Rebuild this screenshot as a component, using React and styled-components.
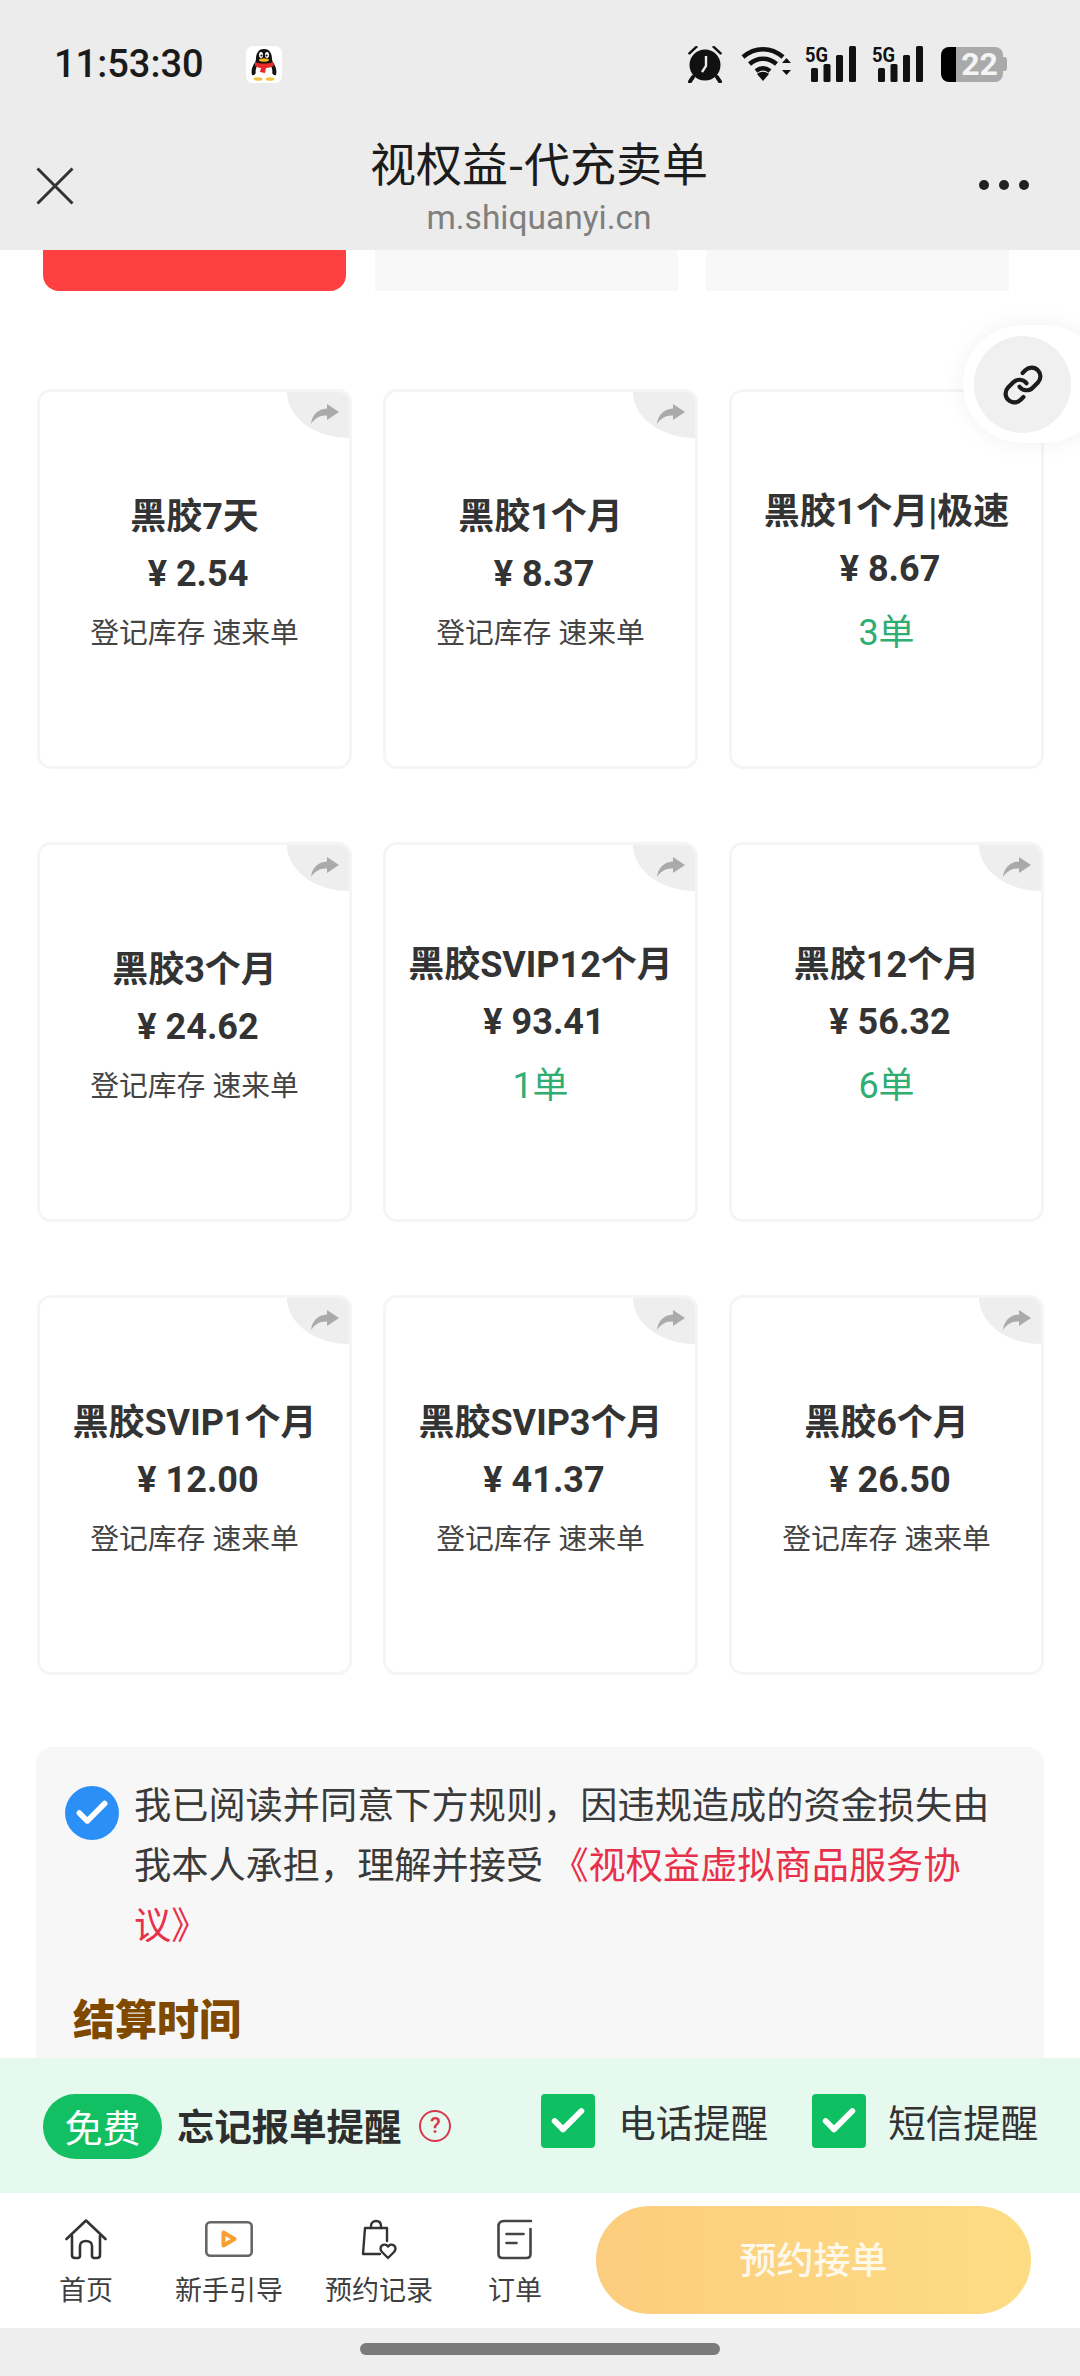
import React from 'react'
import styled, { createGlobalStyle } from 'styled-components'
import { Link as LinkIcon, Check } from 'lucide-react'

const GlobalStyle = createGlobalStyle`
  html, body {
    margin: 0;
    padding: 0;
    background: #fff;
  }
  * {
    box-sizing: border-box;
  }
  body {
    font-family: Roboto, 'Noto Sans CJK SC', sans-serif;
    color: #333;
  }
`

const Page = styled.div`
  width: 1080px;
  height: 2376px;
  display: flex;
  flex-direction: column;
  overflow: hidden;
  background: #fff;
`
const Header = styled.header`
  height: 250px;
  flex: none;
  background: #ececec;
`
const StatusBar = styled.div`
  height: 128px;
  display: flex;
  align-items: center;
  padding: 0 73px 0 54px;
`
const Time = styled.div`
  font-size: 38px;
  font-weight: 500;
  color: #1a1a1a;
  margin-right: 42px;
  line-height: 1;
`
const StatusIcons = styled.div`
  margin-left: auto;
  display: flex;
  align-items: center;
`
const StatusSlot = styled.span`
  display: flex;
  margin-left: ${props => props.$gap}px;
`
const Battery = styled.div`
  display: flex;
  align-items: center;
  margin-left: 17px;
`
const BatteryLevel = styled.div`
  width: 15px;
  height: 35px;
  background: #000;
  border-radius: 8px 0 0 8px;
`
const BatteryBody = styled.div`
  width: 47px;
  height: 35px;
  background: #aaa;
  border-radius: 0 8px 8px 0;
  color: #f4f4f4;
  font-size: 32px;
  font-weight: 700;
  line-height: 35px;
  text-align: center;
`
const BatteryNub = styled.div`
  width: 4px;
  height: 14px;
  background: #aaa;
  border-radius: 0 3px 3px 0;
`
const TitleBar = styled.div`
  height: 122px;
  display: flex;
  align-items: flex-start;
  justify-content: space-between;
  padding: 0 50px 0 36px;
`
const IconButton = styled.div`
  width: ${props => props.$width}px;
  display: flex;
  justify-content: ${props => props.$end ? 'flex-end' : 'flex-start'};
  margin-top: ${props => props.$top}px;
`
const TitleWrap = styled.div`
  display: flex;
  flex-direction: column;
  align-items: center;
  margin-top: 1px;
`
const Title = styled.div`
  font-family: 'Noto Sans CJK SC', sans-serif;
  font-size: 46px;
  line-height: 64px;
  color: #1c1c1c;
`
const Url = styled.div`
  font-size: 33.5px;
  line-height: 44px;
  margin-top: 3px;
  color: #7f7f7f;
`

const Content = styled.main`
  position: relative;
  flex: 1;
  min-height: 0;
  overflow: hidden;
`
const Tabs = styled.div`
  display: flex;
  gap: 28.5px;
  padding-left: 43px;
`
const Tab = styled.div`
  width: 303px;
  height: 41px;
  background: ${props => props.$active ? '#ff4040' : '#f8f8f8'};
  border-radius: ${props => props.$active ? '0 0 16px 16px' : '0'};
`
const CardGrid = styled.div`
  display: grid;
  grid-template-columns: repeat(3, 315px);
  grid-auto-rows: 380px;
  column-gap: 31px;
  row-gap: 73px;
  padding-left: 37px;
  margin-top: 98px;
`
const Card = styled.div`
  position: relative;
  display: flex;
  flex-direction: column;
  align-items: center;
  justify-content: center;
  border: 3px solid #f5f5f5;
  border-radius: 14px;
  background: #fff;
  padding-bottom: 14px;
  overflow: hidden;
`
const CardCorner = styled.div`
  position: absolute;
  top: 0;
  right: 0;
  width: 62px;
  height: 46px;
  background: #eee;
  border-bottom-left-radius: 100% 100%;
  display: flex;
  align-items: center;
  justify-content: flex-end;
  padding: 0 10px 3px 0;
`
const CardTitle = styled.div`
  font-family: Roboto, 'Noto Sans CJK SC', sans-serif;
  font-size: 36px;
  font-weight: 700;
  line-height: 50px;
  color: #333;
`
const CardPrice = styled.div`
  font-size: 36px;
  font-weight: 700;
  line-height: 50px;
  margin-top: 7px;
  padding-left: 7px;
  color: #333;
`
const CardStatus = styled.div`
  font-size: ${props => props.$orders ? 36 : 28.8}px;
  line-height: ${props => props.$orders ? 50 : 40}px;
  margin-top: 14px;
  color: ${props => props.$orders ? '#2fae74' : '#444'};
`
const LinkFloat = styled.div`
  position: absolute;
  top: 75px;
  left: 963px;
  width: 140px;
  height: 118px;
  border-radius: 59px;
  background: #fff;
  box-shadow: 0 0 24px rgba(0, 0, 0, 0.06);
  padding: 11px;
`
const LinkCircle = styled.div`
  width: 97px;
  height: 97px;
  border-radius: 50%;
  background: #f0f0f0;
  display: flex;
  align-items: center;
  justify-content: center;
  color: #1c1c1c;
`
const RulePanel = styled.section`
  margin: 72px 36px 0 36px;
  padding: 26px 20px 40px 29px;
  background: #f7f7f7;
  border-radius: 16px;
`
const AgreeRow = styled.div`
  display: flex;
  align-items: flex-start;
  gap: 15px;
`
const AgreeCheck = styled.div`
  flex: none;
  width: 54px;
  height: 54px;
  margin-top: 13px;
  border-radius: 50%;
  background: #2a8ff7;
  display: flex;
  align-items: center;
  justify-content: center;
  color: #fff;
`
const AgreeText = styled.div`
  width: 862px;
  font-family: 'Noto Sans CJK SC', sans-serif;
  font-size: 37.2px;
  line-height: 60px;
  color: #3a3a3a;
`
const AgreeLink = styled.span`
  color: #e8304a;
`
const RuleHeading = styled.h3`
  margin: 34px 0 0 8px;
  font-family: 'Noto Sans CJK SC', sans-serif;
  font-size: 42px;
  font-weight: 900;
  line-height: 60px;
  color: #7f4a00;
`

const ReminderBar = styled.div`
  height: 135px;
  flex: none;
  display: flex;
  align-items: flex-start;
  background: #e5f9ef;
  padding: 36px 0 0 43px;
`
const FreePill = styled.div`
  width: 119px;
  height: 65px;
  border-radius: 33px;
  background: #12bf63;
  color: #fff;
  font-family: 'Noto Sans CJK SC', sans-serif;
  font-size: 38px;
  line-height: 63px;
  text-align: center;
`
const ReminderTitle = styled.div`
  margin-left: 15px;
  font-family: 'Noto Sans CJK SC', sans-serif;
  font-size: 37.4px;
  font-weight: 700;
  line-height: 63px;
  color: #2e2e2e;
`
const HelpIcon = styled.div`
  width: 32px;
  height: 32px;
  margin: 16px 0 0 18px;
  border: 2px solid #d8384c;
  border-radius: 50%;
  color: #d8384c;
  font-size: 22px;
  font-weight: 500;
  line-height: 28px;
  text-align: center;
`
const ReminderOption = styled.div`
  display: flex;
  align-items: center;
  margin-left: ${props => props.$gap}px;
  height: 54px;
`
const OptionBox = styled.div`
  width: 54px;
  height: 54px;
  border-radius: 4px;
  background: #0fc062;
  color: #fff;
  display: flex;
  align-items: center;
  justify-content: center;
`
const OptionLabel = styled.div`
  margin-left: ${props => props.$gap}px;
  font-family: 'Noto Sans CJK SC', sans-serif;
  font-size: 37.5px;
  line-height: 48px;
  color: #333;
`

const BottomNav = styled.nav`
  height: 135px;
  flex: none;
  display: flex;
  align-items: flex-start;
  padding: 13px 0 0 30px;
  background: #fff;
`
const NavItem = styled.div`
  width: ${props => props.$width}px;
  flex: none;
  display: flex;
  flex-direction: column;
  align-items: center;
  padding-top: 12px;
`
const NavIcon = styled.div`
  height: 42px;
  display: flex;
  align-items: center;
  justify-content: center;
  margin-bottom: 10px;
`
const NavLabel = styled.div`
  font-family: 'Noto Sans CJK SC', sans-serif;
  font-size: 27px;
  line-height: 38px;
  color: #3f3f3f;
`
const ReserveButton = styled.div`
  width: 435px;
  height: 108px;
  margin-left: 8px;
  border-radius: 54px;
  background: linear-gradient(90deg, #fccd7e, #fddc84);
  color: rgba(255, 255, 255, 0.85);
  font-family: 'Noto Sans CJK SC', sans-serif;
  font-size: 37px;
  font-weight: 500;
  line-height: 104px;
  text-align: center;
`
const GestureArea = styled.div`
  height: 48px;
  flex: none;
  background: #eee;
  padding-top: 15px;
  display: flex;
  justify-content: center;
`
const GestureBar = styled.div`
  width: 360px;
  height: 12px;
  border-radius: 6px;
  background: #7a7a7a;
`

const PenguinIcon = () => (
  <svg width="36" height="37" viewBox="0 0 36 37">
    <rect width="36" height="37" rx="7" fill="#fff" />
    <path d="M18 3c-6 0-8 5-8 10 0 2-1 3-2 5-2 3-3 7-2 11 2 1 3-1 4-2 1 3 4 5 8 5s7-2 8-5c1 1 2 3 4 2 1-4 0-8-2-11-1-2-2-3-2-5 0-5-2-10-8-10z" fill="#111" />
    <path d="M11 20c3 2 11 2 14 0 2 4 2 9-1 11-3 2-9 2-12 0-3-2-3-7-1-11z" fill="#fff" />
    <path d="M9 16c5 2 13 2 18 0l1 4c-3 1-6 2-8 2l-1 5-5-1 1-4c-2 0-4-1-6-2z" fill="#e8282b" />
    <ellipse cx="15" cy="9" rx="2" ry="3" fill="#fff" />
    <ellipse cx="21" cy="9" rx="2" ry="3" fill="#fff" />
    <circle cx="15.4" cy="9.6" r="1" fill="#111" />
    <circle cx="20.6" cy="9.6" r="1" fill="#111" />
    <ellipse cx="18" cy="14" rx="5" ry="1.8" fill="#f5b21a" />
    <ellipse cx="12" cy="33" rx="4.5" ry="1.8" fill="#f5c342" />
    <ellipse cx="24" cy="33" rx="4.5" ry="1.8" fill="#f5c342" />
  </svg>
)

const AlarmIcon = () => (
  <svg width="38" height="38" viewBox="0 0 38 38">
    <path d="M2 8 9 1.500c1-.8 2.500-.6 3 .5L4 9.500C3 9.800 1.800 9 2 8zM36 8 29 1.500c-1-.8-2.500-.6-3 .5l8 7.500c1 .3 2.200-.5 2-1.500z" fill="#111" />
    <circle cx="19" cy="20" r="15.500" fill="#111" />
    <path d="M7 32 4 36.500M31 32l3 4.500" stroke="#111" strokeWidth="4" strokeLinecap="round" />
    <path d="M20 11v10l-4 6" stroke="#ececec" strokeWidth="2.400" fill="none" />
  </svg>
)

const WifiIcon = () => (
  <svg width="50" height="36" viewBox="0 0 50 36">
    <g fill="none" stroke="#111" strokeWidth="4.500">
      <path d="M2 11C14 .5 30 .5 42 11" />
      <path d="M8.500 18c8-7 19-7 27 0" />
      <path d="M15 25c4.500-3.500 9.500-3.500 14 0" />
    </g>
    <path d="M16 28c4-3 8-3 12 0l-6 7z" fill="#111" />
    <path d="M41 17l4.500-5 4.500 5zM41 24l4.500 5 4.500-5z" fill="#111" />
  </svg>
)

const SignalIcon = () => (
  <svg width="52" height="42" viewBox="0 -2 52 42">
    <text x="0" y="17" fontFamily="Roboto, sans-serif" fontWeight="700" fontSize="20" textLength="23" lengthAdjust="spacingAndGlyphs" fill="#111">5G</text>
    <rect x="6" y="23" width="7" height="14" rx="1.500" fill="#111" />
    <rect x="18.500" y="19" width="7" height="18" rx="1.500" fill="#111" />
    <rect x="31" y="10" width="7" height="27" rx="1.500" fill="#111" />
    <rect x="44" y="1" width="7" height="36" rx="1.500" fill="#111" />
  </svg>
)

const CloseIcon = () => (
  <svg width="38" height="38" viewBox="0 0 38 38">
    <path d="M1.500 1.500l35 35M36.500 1.500l-35 35" stroke="#333" strokeWidth="3" fill="none" />
  </svg>
)

const MoreIcon = () => (
  <svg width="52" height="12" viewBox="0 0 52 12">
    <circle cx="6" cy="6" r="5" fill="#222" />
    <circle cx="26" cy="6" r="5" fill="#222" />
    <circle cx="46" cy="6" r="5" fill="#222" />
  </svg>
)

const ShareIcon = () => (
  <svg width="28" height="20" viewBox="0 0 28 20">
    <path d="M16 0l12 8-12 8v-4.500C9 11 4 14 0 20 1 11 7 5 16 4.500z" fill="#aaa" />
  </svg>
)

const HomeIcon = () => (
  <svg width="42" height="41" viewBox="0 0 42 41">
    <g fill="none" stroke="#333" strokeWidth="2.600" strokeLinecap="round" strokeLinejoin="round">
      <path d="M1.500 20 21 1.500 40.500 20" />
      <path d="M7 17v19c0 2 1 3 3 3h3c1 0 2-1 2-2V27c0-3 2.500-5 6-5s6 2 6 5v10c0 1 1 2 2 2h3c2 0 3-1 3-3V17" />
    </g>
  </svg>
)

const VideoIcon = () => (
  <svg width="48" height="36" viewBox="0 0 48 36">
    <rect x="1.300" y="1.300" width="45.400" height="33.400" rx="4" fill="none" stroke="#666" strokeWidth="2.600" />
    <path d="M18.500 11.500v13l11-6.500z" fill="none" stroke="#f5a030" strokeWidth="4" strokeLinejoin="round" />
  </svg>
)

const BagIcon = () => (
  <svg width="36" height="41" viewBox="0 0 36 41">
    <g fill="none" stroke="#333" strokeWidth="2.400" strokeLinecap="round" strokeLinejoin="round">
      <path d="M19 35H2L4 9h22v13" />
      <path d="M10 9V7c0-3 2-5 5-5s5 2 5 5v2" />
      <path d="M27 39l-6-6c-2-2-2-5 0-6.500s4.500-1 6 1c1.500-2 4-2.500 6-1s2 4.500 0 6.500z" />
    </g>
  </svg>
)

const OrderIcon = () => (
  <svg width="36" height="41" viewBox="0 0 36 41">
    <g fill="none" stroke="#444" strokeWidth="2.600" strokeLinecap="round">
      <path d="M34 2H7C3.500 2 1.500 4 1.500 7v28c0 2.500 1.500 4 4 4h24c2.500 0 4-1.500 4-4V10" />
      <path d="M9.500 15h17M9.500 24h10" />
    </g>
  </svg>
)

const cards = [
  { title: '黑胶7天', price: '2.54' },
  { title: '黑胶1个月', price: '8.37' },
  { title: '黑胶1个月|极速', price: '8.67', orders: '3单' },
  { title: '黑胶3个月', price: '24.62' },
  { title: '黑胶SVIP12个月', price: '93.41', orders: '1单' },
  { title: '黑胶12个月', price: '56.32', orders: '6单' },
  { title: '黑胶SVIP1个月', price: '12.00' },
  { title: '黑胶SVIP3个月', price: '41.37' },
  { title: '黑胶6个月', price: '26.50' }
]

const navItems = [
  { label: '首页', width: 112, icon: <HomeIcon /> },
  { label: '新手引导', width: 174, icon: <VideoIcon /> },
  { label: '预约记录', width: 126, icon: <BagIcon /> },
  { label: '订单', width: 146, icon: <OrderIcon /> }
]

const App = () => (
  <Page>
    <GlobalStyle />
    <Header>
      <StatusBar>
        <Time>11:53:30</Time>
        <PenguinIcon />
        <StatusIcons>
          <StatusSlot $gap={0}><AlarmIcon /></StatusSlot>
          <StatusSlot $gap={17}><WifiIcon /></StatusSlot>
          <StatusSlot $gap={14}><SignalIcon /></StatusSlot>
          <StatusSlot $gap={15}><SignalIcon /></StatusSlot>
          <Battery>
            <BatteryLevel />
            <BatteryBody>22</BatteryBody>
            <BatteryNub />
          </Battery>
        </StatusIcons>
      </StatusBar>
      <TitleBar>
        <IconButton $width={64} $top={39}><CloseIcon /></IconButton>
        <TitleWrap>
          <Title>视权益-代充卖单</Title>
          <Url>m.shiquanyi.cn</Url>
        </TitleWrap>
        <IconButton $width={52} $top={51} $end><MoreIcon /></IconButton>
      </TitleBar>
    </Header>

    <Content>
      <Tabs>
        <Tab $active />
        <Tab />
        <Tab />
      </Tabs>
      <CardGrid>
        {cards.map(card => (
          <Card key={card.title}>
            <CardCorner><ShareIcon /></CardCorner>
            <CardTitle>{card.title}</CardTitle>
            <CardPrice>¥ {card.price}</CardPrice>
            <CardStatus $orders={!!card.orders}>{card.orders || '登记库存 速来单'}</CardStatus>
          </Card>
        ))}
      </CardGrid>
      <LinkFloat>
        <LinkCircle><LinkIcon size={42} strokeWidth={2.4} /></LinkCircle>
      </LinkFloat>
      <RulePanel>
        <AgreeRow>
          <AgreeCheck><Check size={38} strokeWidth={3.5} /></AgreeCheck>
          <AgreeText>
            我已阅读并同意下方规则，因违规造成的资金损失由我本人承担，理解并接受 <AgreeLink>《视权益虚拟商品服务协议》</AgreeLink>
          </AgreeText>
        </AgreeRow>
        <RuleHeading>结算时间</RuleHeading>
      </RulePanel>
    </Content>

    <ReminderBar>
      <FreePill>免费</FreePill>
      <ReminderTitle>忘记报单提醒</ReminderTitle>
      <HelpIcon>?</HelpIcon>
      <ReminderOption $gap={90}>
        <OptionBox><Check size={40} strokeWidth={3.5} /></OptionBox>
        <OptionLabel $gap={23}>电话提醒</OptionLabel>
      </ReminderOption>
      <ReminderOption $gap={44}>
        <OptionBox><Check size={40} strokeWidth={3.5} /></OptionBox>
        <OptionLabel $gap={22}>短信提醒</OptionLabel>
      </ReminderOption>
    </ReminderBar>

    <BottomNav>
      {navItems.map(item => (
        <NavItem key={item.label} $width={item.width}>
          <NavIcon>{item.icon}</NavIcon>
          <NavLabel>{item.label}</NavLabel>
        </NavItem>
      ))}
      <ReserveButton>预约接单</ReserveButton>
    </BottomNav>

    <GestureArea>
      <GestureBar />
    </GestureArea>
  </Page>
)

export default App
